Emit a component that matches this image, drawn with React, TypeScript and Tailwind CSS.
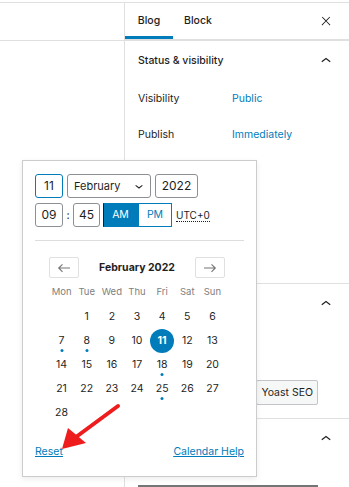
import React from "react"

const font = { fontFamily: "Inter, 'Noto Sans', sans-serif" }

function ChevronUp() {
  return (
    <svg width="20" height="20" viewBox="0 0 24 24" fill="#1e1e1e">
      <path d="M6.5 12.4L12 8l5.5 4.4-.9 1.2L12 10l-4.6 3.6-.9-1.2z" />
    </svg>
  )
}

function ChevronDown() {
  return (
    <svg width="16" height="16" viewBox="0 0 24 24" fill="#1e1e1e">
      <path d="M17.5 11.6L12 16l-5.5-4.4.9-1.2L12 14l4.6-3.6.9 1.2z" />
    </svg>
  )
}

function CloseIcon() {
  return (
    <svg width="14" height="14" viewBox="0 0 24 24" fill="#1e1e1e">
      <path d="M13 11.8l6.1-6.3-1-1-6.1 6.2-6.1-6.2-1 1 6.1 6.3-6.5 6.7 1 1 6.5-6.6 6.5 6.6 1-1z" />
    </svg>
  )
}

function Arrow({ dir }: { dir: "left" | "right" }) {
  return (
    <svg width="18" height="18" viewBox="0 0 24 24" fill="#757575">
      {dir === "left" ? (
        <path d="M20 11.2H6.8l3.7-3.7-1-1L3.9 12l5.6 5.5 1-1-3.7-3.7H20z" />
      ) : (
        <path d="M4 12.8h13.2l-3.7 3.7 1 1 5.6-5.5-5.6-5.5-1 1 3.7 3.7H4z" />
      )}
    </svg>
  )
}

const weekdays = ["Mon", "Tue", "Wed", "Thu", "Fri", "Sat", "Sun"]
const events = [7, 8, 18, 25]

function Calendar() {
  const cells: (number | null)[] = [null]
  for (let d = 1; d <= 28; d++) cells.push(d)
  return (
    <div className="w-[176px] ml-[14px] mt-[16px]">
      <div className="flex items-center justify-between h-[21px]">
        <button className="w-[30px] h-[21px] border border-[#e0e0e0] rounded-[2px] flex items-center justify-center">
          <Arrow dir="left" />
        </button>
        <div className="text-[10.5px] font-bold text-[#1e1e1e]">February 2022</div>
        <button className="w-[30px] h-[21px] border border-[#e0e0e0] rounded-[2px] flex items-center justify-center">
          <Arrow dir="right" />
        </button>
      </div>
      <div className="grid grid-cols-7 mt-[6px]">
        {weekdays.map((w) => (
          <div key={w} className="h-[16px] flex items-center justify-center text-[9.5px] text-[#808080]">
            {w}
          </div>
        ))}
      </div>
      <div className="grid grid-cols-7 mt-[5px]">
        {cells.map((d, i) => (
          <div key={i} className="h-[24px] flex items-center justify-center relative">
            {d === 11 ? (
              <span className="w-[24px] h-[24px] rounded-full bg-[#007cba] text-white font-bold text-[10.5px] flex items-center justify-center">
                11
              </span>
            ) : d ? (
              <span className="text-[10.5px] text-[#1e1e1e]">{d}</span>
            ) : null}
            {d && events.includes(d) ? (
              <span className="absolute left-1/2 -translate-x-1/2 bottom-[1px] w-[3px] h-[3px] rounded-full bg-[#007cba]" />
            ) : null}
          </div>
        ))}
      </div>
    </div>
  )
}

function DatePopover() {
  return (
    <div className="absolute left-[22px] top-[160px] w-[235px] h-[317px] bg-white border border-[#cccccc] shadow-[0_2px_6px_rgba(0,0,0,0.08)] px-[12px] pt-[13px] flex flex-col">
      <div className="flex items-center gap-[4px]">
        <div className="w-[28px] h-[24px] border-[1.5px] border-[#007cba] rounded-[3px] flex items-center justify-center text-[12px] text-[#1e1e1e]">
          11
        </div>
        <div className="w-[84px] h-[24px] border border-[#8c8f94] rounded-[3px] flex items-center justify-between pl-[6px] pr-[3px] text-[11px] text-[#1e1e1e]">
          <span>February</span>
          <ChevronDown />
        </div>
        <div className="w-[43px] h-[24px] border border-[#8c8f94] rounded-[3px] flex items-center justify-center text-[12px] text-[#1e1e1e]">
          2022
        </div>
      </div>
      <div className="flex items-center mt-[5px]">
        <div className="w-[28px] h-[24px] border border-[#8c8f94] rounded-[3px] flex items-center justify-center text-[12px] text-[#1e1e1e]">
          09
        </div>
        <span className="w-[10px] text-center text-[11px] text-[#1e1e1e]">:</span>
        <div className="w-[27px] h-[24px] border border-[#8c8f94] rounded-[3px] flex items-center justify-center text-[12px] text-[#1e1e1e]">
          45
        </div>
        <div className="flex ml-[3px] h-[24px]">
          <div className="w-[35px] bg-[#007cba] border border-[#007cba] border-l-[#1e1e1e] text-white text-[10.5px] flex items-center justify-center">
            AM
          </div>
          <div className="w-[34px] border border-[#007cba] text-[#007cba] text-[10.5px] flex items-center justify-center">
            PM
          </div>
        </div>
        <span className="ml-[4px] text-[10px] text-[#1e1e1e] border-b border-dotted border-[#1e1e1e] leading-[12px]">
          UTC+0
        </span>
      </div>
      <div className="mt-[13px] h-px bg-[#dddddd]" />
      <Calendar />
      <div className="mt-auto mb-[16px] flex justify-between text-[10.5px] text-[#007cba] underline">
        <a>Reset</a>
        <a>Calendar Help</a>
      </div>
    </div>
  )
}

function RedArrow() {
  return (
    <svg className="absolute left-0 top-0 pointer-events-none" width="349" height="487">
      <line x1="118" y1="406" x2="76" y2="437" stroke="#ee1c1c" strokeWidth="4" strokeLinecap="round" />
      <polygon points="62,449 68,428 86,443" fill="#ee1c1c" />
    </svg>
  )
}

export default function App() {
  return (
    <div className="relative w-[349px] h-[487px] overflow-hidden bg-white" style={font}>
      <div className="h-[2px]" />
      <div className="flex h-[485px] border-t border-[#e0e0e0]">
        <div className="w-[124px] shrink-0">
          <div className="h-[38px] border-b border-[#e0e0e0]" />
        </div>
        <div className="flex-1 border-l border-[#e0e0e0] flex flex-col">
          <div className="h-[38px] flex items-stretch border-b-2 border-[#e0e0e0]">
            <div className="w-[48px] flex items-center justify-center text-[10.5px] font-medium text-[#1e1e1e] shadow-[inset_0_-3px_0_#007cba]">
              Blog
            </div>
            <div className="w-[50px] flex items-center justify-center text-[10.5px] font-medium text-[#1e1e1e]">
              Block
            </div>
            <div className="ml-auto w-[24px] mr-[11px] flex items-center justify-center">
              <CloseIcon />
            </div>
          </div>
          <div className="h-[242px]">
            <div className="h-[40px] flex items-center justify-between pl-[13px] pr-[13px]">
              <span className="text-[10.5px] font-medium text-[#1e1e1e]">Status &amp; visibility</span>
              <ChevronUp />
            </div>
            <div className="h-[36px] flex items-center pl-[13px] text-[10.5px]">
              <span className="w-[94px] text-[#1e1e1e]">Visibility</span>
              <span className="text-[#007cba]">Public</span>
            </div>
            <div className="h-[36px] flex items-center pl-[13px] text-[10.5px]">
              <span className="w-[94px] text-[#1e1e1e]">Publish</span>
              <span className="text-[#007cba]">Immediately</span>
            </div>
          </div>
          <div className="h-[135px] border-t border-[#e0e0e0]">
            <div className="h-[40px] flex items-center justify-end pr-[13px]">
              <ChevronUp />
            </div>
            <div className="flex justify-end pr-[31px] mt-[56px]">
              <div className="h-[25px] px-[4px] flex items-center border border-[#c3c4c7] bg-[#f6f7f7] rounded-[2px] text-[10.5px] text-[#1e1e1e]">
                Yoast SEO
              </div>
            </div>
          </div>
          <div className="flex-1 border-t border-[#e0e0e0] flex flex-col">
            <div className="h-[40px] flex items-center justify-end pr-[13px]">
              <ChevronUp />
            </div>
            <div className="mt-auto ml-[13px] mr-[31px] h-[2px] bg-[#757575]" />
          </div>
        </div>
      </div>
      <DatePopover />
      <RedArrow />
    </div>
  )
}
